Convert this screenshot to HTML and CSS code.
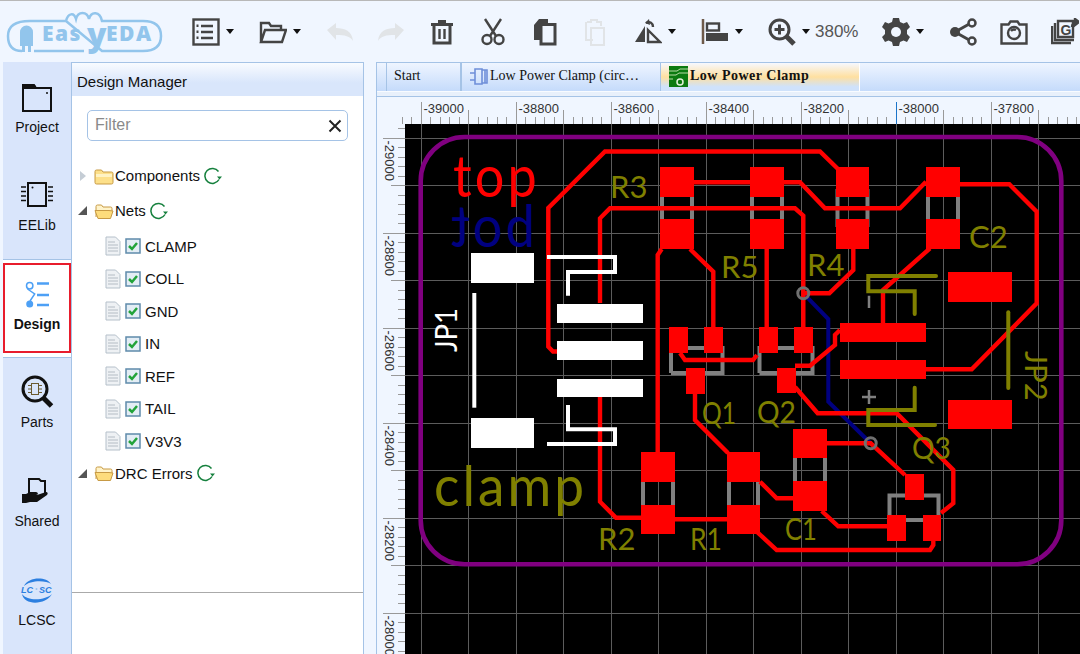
FILE: index.html
```html
<!DOCTYPE html>
<html lang="en">
<head>
<meta charset="UTF-8">
<meta name="viewport" content="width=device-width, initial-scale=1.0">
<title>EasyEDA - Low Power Clamp</title>
<link rel="stylesheet" href="styles.css">
</head>
<body>

<svg class="defs" width="0" height="0">
  <symbol id="folder" viewBox="0 0 20 18">
    <path d="M1 4.500a1.500 1.500 0 0 1 1.500-1.500h5l1.500 2h8.500a1.500 1.500 0 0 1 1.500 1.500v9a1.500 1.500 0 0 1-1.500 1.500h-15a1.500 1.500 0 0 1-1.500-1.500z" fill="#fde08a" stroke="#c79a45"/>
    <path d="M2 7h16v3H2z" fill="#fff3c4"/>
  </symbol>
  <symbol id="folder-open" viewBox="0 0 20 18">
    <path d="M2 15V4.500a1.500 1.500 0 0 1 1.500-1.500h4l1.500 2h7.500a1.500 1.500 0 0 1 1.500 1.500V9" fill="#fff3c9" stroke="#c79a45"/>
    <path d="M1 8.500h14l4 .5-2.500 7.500H4z" fill="#fddc7c" stroke="#c79a45"/>
  </symbol>
  <symbol id="refresh" viewBox="0 0 18 18">
    <path d="M15 12.500a7.500 7.500 0 1 1-.5-8" fill="none" stroke="#15803d" stroke-width="1.500"/>
    <path d="M13 9.500h5l-2.500 3z" fill="#15803d"/>
  </symbol>
  <symbol id="doc" viewBox="0 0 16 20">
    <path d="M1 1h9.500L15 5.500V19H1z" fill="#eef1f4" stroke="#b5c0ca"/>
    <path d="M3 6h7M3 9h10M3 12h10M3 15h10" stroke="#b4bcc4"/>
  </symbol>
  <symbol id="check" viewBox="0 0 16 16">
    <rect x="1" y="1" width="14" height="14" fill="#e3edf5" stroke="#5f8bab" stroke-width="1.500"/>
    <path d="M4 8l3 3 5-6" fill="none" stroke="#22a33a" stroke-width="2.500"/>
  </symbol>
  <symbol id="clip-pcb" viewBox="0 0 19 21">
    <rect width="19" height="21" fill="#0c7a10"/>
    <path d="M0 5h8l3-2h8M0 9h7l3-2h9M0 13h4" fill="none" stroke="#b7dba4"/>
    <circle cx="11" cy="16" r="3" fill="none" stroke="#e4f0da" stroke-width="1.500"/>
  </symbol>
</svg>

<header class="toolbar">
  <svg class="logo" width="170" height="50" viewBox="0 0 170 50">
    <path class="logo-line" d="M66 13H30Q8 13 8 28Q8 43 22 43M34 43H84M102 43H143Q161 43 161 28Q161 13 143 13H102C100 3 91 3 89 11C87 3 78 3 76 11C74 4 68 5 66 13Z"/>
    <path class="logo-fill" d="M20 24a6.500 6.500 0 0 1 13 0V38h-2v6h-3v-6h-3v6h-3v-6h-2z"/>
    <text class="logo-text" x="42" y="33">Eas</text>
    <text class="logo-y" x="87" y="38">y</text>
    <text class="logo-text" x="106" y="33">EDA</text>
  </svg>

  <div class="tools">
    <div class="tool drop">
      <svg width="28" height="28" viewBox="0 0 28 28"><rect x="1.500" y="1.500" width="25" height="25" class="ic-line"/><path d="M9 8h12M9 14h12M9 20h12" class="ic-line"/><path d="M4.500 6.500h2v2.500h-2zM4.500 12.500h2v2.500h-2zM4.500 18.500h2v2.500h-2z" class="ic-fill"/></svg>
      <span class="caret"></span>
    </div>
    <div class="tool drop">
      <svg width="28" height="28" viewBox="0 0 28 28"><path d="M2 24V5h8l2 3h10v4M2 24l4-12h21l-4 12z" class="ic-line"/></svg>
      <span class="caret"></span>
    </div>
    <div class="tool">
      <svg width="28" height="28" viewBox="0 0 28 28"><path d="M1 12L10 5v5c9 0 16 3 17 13-3-5-8-6-17-6v5z" class="ic-off"/></svg>
    </div>
    <div class="tool">
      <svg width="28" height="28" viewBox="0 0 28 28"><path d="M27 12L18 5v5C9 10 2 13 1 23c3-5 8-6 17-6v5z" class="ic-off"/></svg>
    </div>
    <div class="tool">
      <svg width="28" height="28" viewBox="0 0 28 28"><path d="M3 5h22v3H3zM10 5V2h8v3z" class="ic-fill"/><path d="M6 8v17h16V8" class="ic-thick"/><path d="M11.500 11v10M16.500 11v10" class="ic-line"/></svg>
    </div>
    <div class="tool">
      <svg width="28" height="28" viewBox="0 0 28 28"><path d="M6 1l11 17M22 1L11 18" class="ic-line"/><circle cx="8" cy="21.500" r="4.500" class="ic-line"/><circle cx="20" cy="21.500" r="4.500" class="ic-line"/></svg>
    </div>
    <div class="tool">
      <svg width="28" height="28" viewBox="0 0 28 28"><path d="M9 1h9v5H11v16H4V7z" class="ic-fill"/><rect x="11" y="6.500" width="14" height="19.500" class="ic-thick"/></svg>
    </div>
    <div class="tool">
      <svg width="28" height="28" viewBox="0 0 28 28"><path d="M6 4h4V2h6v2h4v4M5 4v18h7" class="ic-paste"/><rect x="10" y="10" width="13" height="17" class="ic-paste"/></svg>
    </div>
    <div class="tool drop flip">
      <svg width="28" height="28" viewBox="0 0 28 28"><path d="M11 8v16H1z" class="ic-fill"/><path d="M14 12l12 12H14z" class="ic-line"/><path d="M12 5c4-2 7 0 7 4" class="ic-line"/><path d="M15 1l-4 4 5 2z" class="ic-fill"/></svg>
      <span class="caret"></span>
    </div>
    <div class="tool drop">
      <svg width="28" height="28" viewBox="0 0 28 28"><path d="M2 1v25" class="ic-rust"/><rect x="6" y="5.500" width="12" height="7" class="ic-line"/><rect x="5" y="15" width="22" height="8" class="ic-fill"/></svg>
      <span class="caret"></span>
    </div>
    <div class="tool zoom">
      <svg width="28" height="28" viewBox="0 0 28 28"><circle cx="11.500" cy="11.500" r="9.500" class="ic-thick"/><path d="M11.500 6.500v10M6.500 11.500h10" class="ic-thick"/><path d="M18 18l8 8" class="ic-heavy"/></svg>
      <span class="caret"></span>
      <span class="zoom-val">380%</span>
    </div>
    <div class="tool drop">
      <svg width="28" height="28" viewBox="0 0 28 28"><path d="M11 0h6l1 4 3.500 1.500L25 4l3 5-3 3v4l3 3-3 5-3.500-1.500L18 24l-1 4h-6l-1-4-3.500-1.500L3 24l-3-5 3-3v-4L0 9l3-5 3.500 1.500L10 4z" class="ic-fill"/><circle cx="14" cy="14" r="5" class="ic-hole"/></svg>
      <span class="caret"></span>
    </div>
    <div class="tool">
      <svg width="28" height="28" viewBox="0 0 28 28"><path d="M6 14L22 5M6 14l16 9" class="ic-thick"/><circle cx="6" cy="14" r="5" class="ic-fill"/><circle cx="23" cy="5" r="3.500" class="ic-ring"/><circle cx="23" cy="23" r="3.500" class="ic-ring"/></svg>
    </div>
    <div class="tool">
      <svg width="28" height="28" viewBox="0 0 28 28"><path d="M1.500 6.500h7l2-3h7l2 3h7v19h-25z" class="ic-line"/><circle cx="14" cy="15" r="6" class="ic-line"/><path d="M11 13a4 4 0 0 1 5-1" class="ic-line"/></svg>
    </div>
    <div class="tool">
      <svg width="28" height="28" viewBox="0 0 28 28"><path d="M1 8v17h19M4 5v17h19" class="ic-line"/><path d="M7 3h15v16H7z" class="ic-line"/><text class="ic-g" x="9.500" y="17">G</text><path d="M21 9c0-3 2-5 5-5M24 1l4 3-4 3z" class="ic-line"/></svg>
    </div>
  </div>
</header>

<main class="workspace">
  <nav class="sidebar">
    <div class="side-item first">
      <svg width="32" height="32" viewBox="0 0 32 32"><path d="M2 1h11l2 3h15v23H2z" class="nav-line"/><path d="M1 1h13l2 4H1z" class="nav-fill"/><circle cx="26" cy="9" r="1" class="nav-fill"/></svg>
      <span>Project</span>
    </div>
    <div class="side-item second">
      <svg width="32" height="32" viewBox="0 0 32 32"><rect x="7" y="1" width="18" height="23" class="nav-line"/><circle cx="11.500" cy="5.500" r="1" class="nav-fill"/><path d="M0 5h5M0 9.500h5M0 14h5M0 18.500h5M27 5h5M27 9.500h5M27 14h5M27 18.500h5" class="nav-thin"/></svg>
      <span>EELib</span>
    </div>
    <div class="side-item active">
      <svg width="32" height="32" viewBox="0 0 32 32"><circle cx="8.700" cy="4.700" r="3.200" class="des-ring"/><path d="M6.500 8l7.200 5-4.700 7" class="des-thin"/><circle cx="8.700" cy="23" r="3.500" class="des-fill"/><path d="M16 2.500h12M16 14h12M16 24h12" class="des-bar"/></svg>
      <span>Design</span>
    </div>
    <div class="side-item">
      <svg width="32" height="32" viewBox="0 0 32 32"><circle cx="14" cy="10" r="12" class="nav-heavy"/><path d="M22.500 19l8 8" class="nav-heavier"/><rect x="10.500" y="4.500" width="7" height="11" class="nav-chip"/><path d="M7 6.500h3M7 10h3M7 13.500h3M18 6.500h3M18 10h3M18 13.500h3" class="nav-chip"/></svg>
      <span>Parts</span>
    </div>
    <div class="side-item">
      <svg width="32" height="32" viewBox="0 0 32 32"><path d="M8 15V1h10l2 2h4v12" class="nav-line"/><path d="M1 16h4l4-2h6c2 0 3 3 0 3h-4 5l9-3c2 0 2 2 1 3l-10 7H9l-4 1H1z" class="nav-fill"/></svg>
      <span>Shared</span>
    </div>
    <div class="side-item">
      <svg width="32" height="32" viewBox="0 0 32 32"><path d="M3 9C7 0 25-1 30 7 25 3 9 3 3 9z" class="lc-fill"/><path d="M1 17c2 12 24 11 30 0-6 6-24 8-30 0z" class="lc-fill"/><text class="lc-text" x="0" y="16">LC</text><text class="lc-text" x="18" y="16">SC</text><circle cx="15.500" cy="12" r="1" class="lc-dot"/></svg>
      <span>LCSC</span>
    </div>
  </nav>

  <section class="manager">
    <div class="manager-title">Design Manager</div>
    <div class="filter">
      <span class="filter-text">Filter</span>
      <svg width="14" height="14" viewBox="0 0 14 14"><path d="M1.500 1.500l11 11M12.500 1.500l-11 11" class="filter-x"/></svg>
    </div>
    <div class="tree">
      <div class="tree-row">
        <span class="arrow-closed"></span>
        <svg class="ic-folder" width="20" height="18"><use href="#folder"/></svg>
        <span>Components</span>
        <svg class="ic-refresh" width="18" height="18"><use href="#refresh"/></svg>
      </div>
      <div class="tree-row">
        <span class="arrow-open"></span>
        <svg class="ic-folder" width="20" height="18"><use href="#folder-open"/></svg>
        <span>Nets</span>
        <svg class="ic-refresh" width="18" height="18"><use href="#refresh"/></svg>
      </div>
      <ul class="nets">
        <li><svg width="16" height="20"><use href="#doc"/></svg><svg width="16" height="16"><use href="#check"/></svg><span>CLAMP</span></li>
        <li><svg width="16" height="20"><use href="#doc"/></svg><svg width="16" height="16"><use href="#check"/></svg><span>COLL</span></li>
        <li><svg width="16" height="20"><use href="#doc"/></svg><svg width="16" height="16"><use href="#check"/></svg><span>GND</span></li>
        <li><svg width="16" height="20"><use href="#doc"/></svg><svg width="16" height="16"><use href="#check"/></svg><span>IN</span></li>
        <li><svg width="16" height="20"><use href="#doc"/></svg><svg width="16" height="16"><use href="#check"/></svg><span>REF</span></li>
        <li><svg width="16" height="20"><use href="#doc"/></svg><svg width="16" height="16"><use href="#check"/></svg><span>TAIL</span></li>
        <li><svg width="16" height="20"><use href="#doc"/></svg><svg width="16" height="16"><use href="#check"/></svg><span>V3V3</span></li>
      </ul>
      <div class="tree-row">
        <span class="arrow-open"></span>
        <svg class="ic-folder" width="20" height="18"><use href="#folder-open"/></svg>
        <span>DRC Errors</span>
        <svg class="ic-refresh" width="18" height="18"><use href="#refresh"/></svg>
      </div>
    </div>
    <div class="manager-foot"></div>
  </section>

  <section class="editor">
    <div class="tabs">
      <div class="tab tab-start">Start</div>
      <div class="tab tab-sch">
        <svg width="19" height="19" viewBox="0 0 19 19"><path d="M6 2h7v15H6zM6 6H1M6 13H1M13 3h5v13h-5M16 3v13" class="sch-line"/></svg>
        <span>Low Power Clamp (circ…</span>
      </div>
      <div class="tab tab-pcb">
        <svg width="19" height="21"><use href="#clip-pcb"/></svg>
        <span>Low Power Clamp</span>
      </div>
    </div>
    <div class="tabs-foot"></div>
    <svg id="rulerTop" class="ruler-top" width="703" height="27" viewBox="377 97 703 27"></svg>
    <div class="stage">
      <svg id="rulerLeft" class="ruler-left" width="28" height="530" viewBox="377 124 28 530"></svg>
      <svg class="board" width="675" height="530" viewBox="405 124 675 530">
        <g id="grid"></g>

        <rect class="outline" x="420.700" y="137" width="640.600" height="427.300" rx="44"/>

        <!-- bottom layer -->
        <path class="bottom" d="M803.300 293.300L828.300 319V401.700L870.700 443.300"/>
        <text class="bottom-text" transform="translate(535 246.700) scale(-.9 1)" textLength="93">bot</text>

        <!-- top silk under the pads -->
        <g class="gray">
          <path d="M662 197V219M692 197V219M752 197V219M782 197V219"/>
          <path d="M837.500 189V227M867.500 189V227M928 197V219M958 197V219"/>
          <path d="M643 482V505M673 482V505M729 473V505M758 482V505M795 458V481M825 458V481"/>
          <path d="M671 373V348H722.500V373H671M759.500 373V348H812.500V373H759.500M889.500 520V495.500H938.500V520H889.500"/>
        </g>

        <!-- tracks -->
        <g class="track">
          <path d="M557 351.500H553L548.300 346.700V208L605 151.500H820L838 169"/>
          <path d="M694 182.300H750M784 182.300H800L825 208.300H900L926 181.700"/>
          <path d="M960 184.300H1009.300L1036.700 211.700V303.300L971.700 369.300H926"/>
          <path d="M600 303V218.300L610 208.300H795L803.300 215.700V327.300"/>
          <path d="M600 397V501.700L616 517.700H641"/>
          <path d="M661.700 249L657.700 255V452M690 249L713.300 271.700V327.300"/>
          <path d="M675 519.300H727M760 481.700L776.700 498.300H793"/>
          <path d="M756.700 531.700L776.700 550H930L933.300 545V538"/>
          <path d="M821.700 511L838.300 526.300H888M827 443.300H870.700L905 475"/>
          <path d="M941 513L953.300 503.300V470L896.700 413.300H817.700L795 387"/>
          <path d="M680 353L685 360H753L757 355M766.700 249V327"/>
          <path d="M695 394V420L728 453"/>
          <path d="M853.300 249V270L829.300 293.300H803.300"/>
          <path d="M795 365.700H810L835 345V335L840 330"/>
          <path d="M883 323V290L930 248.300"/>
        </g>

        <!-- pads -->
        <g class="pad">
          <rect x="660" y="167" width="34" height="30"/><rect x="660" y="219" width="34" height="30"/>
          <rect x="750" y="167" width="34" height="30"/><rect x="750" y="219" width="34" height="30"/>
          <rect x="836" y="167" width="33" height="30"/><rect x="836" y="219" width="33" height="30"/>
          <rect x="926" y="167" width="34" height="30"/><rect x="926" y="219" width="34" height="30"/>
          <rect x="641" y="452" width="34" height="30"/><rect x="641" y="505" width="34" height="29"/>
          <rect x="727" y="452" width="33" height="30"/><rect x="727" y="505" width="33" height="29"/>
          <rect x="793" y="429" width="34" height="29"/><rect x="793" y="481" width="34" height="30"/>
          <rect x="669" y="327" width="19" height="26"/><rect x="704" y="327" width="19" height="26"/><rect x="686" y="368" width="19" height="26"/>
          <rect x="759" y="327" width="19" height="26"/><rect x="794" y="327" width="19" height="26"/><rect x="777" y="368" width="19" height="25"/>
          <rect x="905" y="474" width="19" height="26"/><rect x="887" y="515" width="19" height="26"/><rect x="923" y="515" width="18" height="26"/>
          <rect x="840" y="323" width="86" height="19"/><rect x="840" y="360" width="86" height="19"/>
          <rect x="948" y="272" width="64" height="30"/><rect x="948" y="400" width="64" height="29"/>
        </g>

        <!-- JP1 -->
        <g class="white-pad">
          <rect x="471" y="253" width="63" height="30"/><rect x="471" y="418" width="63" height="30"/>
          <rect x="557" y="304" width="86" height="19"/><rect x="557" y="341" width="86" height="19"/><rect x="557" y="379" width="86" height="18"/>
        </g>
        <g class="white-silk">
          <path d="M474.300 293V407.700"/>
          <path d="M547 257H615V272H568V295.700"/>
          <path d="M568 405V429.300H615V444H547"/>
        </g>

        <!-- olive silk -->
        <g class="olive">
          <path d="M936 276H868.300V291.300H914.700V314"/>
          <path d="M914.700 387.700V410H868.300V425H935"/>
          <path d="M1008.300 312.300V388"/>
        </g>
        <path class="gray-thin" d="M869 295.700V308M862 397H876M869 390V404"/>

        <!-- vias -->
        <circle class="via" cx="803.300" cy="293.300" r="5.500"/>
        <circle class="via" cx="870.700" cy="443.300" r="5.500"/>

        <!-- text -->
        <text class="top-text" transform="translate(453 197) scale(.9 1)" textLength="93">top</text>
        <text class="olive-big" transform="translate(434 506) scale(.95 1)" textLength="158">clamp</text>
        <text class="jp1" transform="rotate(-90 457 352)" x="457" y="352" textLength="44" lengthAdjust="spacingAndGlyphs">JP1</text>
        <text class="label" transform="rotate(90 1025 351)" x="1025" y="351">JP2</text>
        <text class="label" x="610" y="198">R3</text>
        <text class="label" x="721" y="278">R5</text>
        <text class="label" x="807" y="276">R4</text>
        <text class="label" x="969" y="248">C2</text>
        <text class="label" x="702" y="424" textLength="34" lengthAdjust="spacingAndGlyphs">Q1</text>
        <text class="label" x="757" y="423" textLength="39" lengthAdjust="spacingAndGlyphs">Q2</text>
        <text class="label" x="912" y="459" textLength="39" lengthAdjust="spacingAndGlyphs">Q3</text>
        <text class="label" x="598" y="550">R2</text>
        <text class="label" x="690" y="550" textLength="32" lengthAdjust="spacingAndGlyphs">R1</text>
        <text class="label" x="785" y="540" textLength="32" lengthAdjust="spacingAndGlyphs">C1</text>
      </svg>
    </div>
  </section>
</main>

<script src="script.js"></script>
</body>
</html>
```

FILE: styles.css
```css
* {
    box-sizing: border-box;
}

body {
    margin: 0;
    width: 1080px;
    height: 654px;
    overflow: hidden;
    background-color: #f0f6ff;
    font-family: "Liberation Sans", Arial, sans-serif;
    color: #111;
}

.defs {
    display: block;
    height: 0;
}

/* toolbar */
.toolbar {
    height: 62px;
    border-top: 1px solid #b8b8b8;
    display: flex;
    align-items: center;
}

.logo {
    flex: none;
    width: 170px;
    margin-top: 3px;
}

.logo-line {
    fill: none;
    stroke: #92c5ec;
    stroke-width: 2.5;
}

.logo-fill {
    fill: #92c5ec;
}

.logo-text {
    fill: #92c5ec;
    font-family: "Open Sans", sans-serif;
    font-weight: 800;
    font-size: 21px;
    letter-spacing: 1.5px;
}

.logo-y {
    fill: #92c5ec;
    font-family: "Open Sans", sans-serif;
    font-weight: 800;
    font-size: 32px;
}

.tools {
    display: flex;
    align-items: center;
    margin-left: 22px;
}

.tool {
    flex: none;
    width: 51px;
    display: flex;
    align-items: center;
}

.tool.drop {
    width: 67px;
}

.tool.flip {
    width: 69px;
    padding-left: 2px;
}

.tool.zoom {
    width: 114px;
}

.caret {
    width: 0;
    height: 0;
    margin-left: 6px;
    border-top: 5px solid #111;
    border-left: 4.5px solid transparent;
    border-right: 4.5px solid transparent;
}

.zoom-val {
    font-size: 17px;
    color: #555;
    margin-left: 5px;
}

.ic-line {
    fill: none;
    stroke: #444;
    stroke-width: 2.4;
}

.ic-thick {
    fill: none;
    stroke: #444;
    stroke-width: 3;
}

.ic-heavy {
    fill: none;
    stroke: #444;
    stroke-width: 5;
}

.ic-fill {
    fill: #444;
}

.ic-off {
    fill: #e1e4e7;
}

.ic-paste {
    fill: none;
    stroke: #e1e4e7;
    stroke-width: 2;
}

.ic-rust {
    fill: none;
    stroke: #6e5a4a;
    stroke-width: 2.5;
}

.ic-hole {
    fill: #f0f6ff;
}

.ic-ring {
    fill: #f0f6ff;
    stroke: #444;
    stroke-width: 2.5;
}

.ic-g {
    fill: #444;
    font-size: 14px;
    font-weight: 700;
}

/* main area */
.workspace {
    display: flex;
    height: 592px;
    padding-left: 3px;
}

.sidebar {
    flex: none;
    width: 69px;
    background-color: #d9e5fb;
    border-right: 1px solid #a5c3e6;
}

.side-item {
    position: relative;
    height: 99px;
    padding-top: 21px;
    display: flex;
    flex-direction: column;
    align-items: center;
    font-size: 14px;
    line-height: 16px;
}

.side-item svg {
    overflow: visible;
    margin-bottom: 3px;
}

.side-item.first {
    height: 100px;
    padding-top: 22px;
}

.side-item.second {
    height: 97px;
    padding-top: 20px;
}

.side-item.active {
    background-color: #fff;
    border-top: 1px solid #a5c3e6;
    border-bottom: 1px solid #a5c3e6;
    padding-top: 21px;
    font-weight: 700;
}

.side-item.active::after {
    content: "";
    position: absolute;
    left: 0;
    right: 0;
    top: 3px;
    bottom: 4px;
    border: 2px solid #e81c2c;
}

.nav-line {
    fill: none;
    stroke: #111;
    stroke-width: 2;
}

.nav-thin {
    fill: none;
    stroke: #111;
    stroke-width: 1.5;
}

.nav-fill {
    fill: #111;
}

.nav-heavy {
    fill: none;
    stroke: #111;
    stroke-width: 3;
}

.nav-heavier {
    fill: none;
    stroke: #111;
    stroke-width: 5;
}

.nav-chip {
    fill: none;
    stroke: #6b5a30;
    stroke-width: 1;
}

.des-ring {
    fill: none;
    stroke: #4da0f5;
    stroke-width: 1.5;
}

.des-thin {
    fill: none;
    stroke: #4da0f5;
    stroke-width: 1.5;
}

.des-fill {
    fill: #4da0f5;
}

.des-bar {
    fill: none;
    stroke: #4da0f5;
    stroke-width: 2.5;
}

.lc-fill {
    fill: #2c7fe0;
}

.lc-text {
    fill: #2c7fe0;
    font-size: 9px;
    font-weight: 700;
    font-style: italic;
}

.lc-dot {
    fill: #9cc3ee;
}

/* design manager */
.manager {
    flex: none;
    width: 292px;
    background-color: #fff;
    border-right: 1px solid #a5c3e6;
    display: flex;
    flex-direction: column;
}

.manager-title {
    height: 34px;
    border-top: 1px solid #a5c3e6;
    padding: 9px 0 0 5px;
    font-size: 15px;
    line-height: 20px;
    background: linear-gradient(to bottom, #f8fbff, #d9e6fb 60%);
}

.filter {
    margin: 14px 0 0 15px;
    width: 261px;
    height: 31px;
    border: 1px solid #a5c3e6;
    border-radius: 5px;
    padding: 0 5px 0 7px;
    display: flex;
    align-items: center;
    justify-content: space-between;
}

.filter-text {
    font-size: 16px;
    color: #8a8a8a;
    padding-bottom: 2px;
}

.filter-x {
    fill: none;
    stroke: #222;
    stroke-width: 2;
}

.tree {
    flex: 1;
    margin-top: 17px;
    font-size: 15px;
}

.tree-row {
    height: 35px;
    display: flex;
    align-items: center;
    padding-left: 6px;
}

.arrow-closed {
    width: 0;
    height: 0;
    margin-left: 2px;
    margin-right: 8px;
    border-left: 6px solid #c5cdd5;
    border-top: 5px solid transparent;
    border-bottom: 5px solid transparent;
}

.arrow-open {
    width: 0;
    height: 0;
    margin-right: 7px;
    border-bottom: 9px solid #555;
    border-left: 9px solid transparent;
}

.ic-folder {
    margin-right: 1px;
}

.ic-refresh {
    margin-left: 4px;
}

.nets {
    list-style: none;
    margin: 2px 0 -2px;
    padding: 0 0 0 33px;
}

.nets li {
    height: 32.5px;
    display: flex;
    align-items: center;
    gap: 4px;
}

.manager-foot {
    height: 62px;
    border-top: 1px solid #aaa;
}

/* editor */
.editor {
    flex: none;
    width: 704px;
    margin-left: 12px;
    border-left: 1px solid #a5c3e6;
    border-top: 1px solid #a5c3e6;
    display: flex;
    flex-direction: column;
}

.tabs {
    height: 28px;
    display: flex;
    padding-left: 9px;
    background: linear-gradient(to bottom, #eff5ff, #c5dbfb);
    font-family: "Liberation Serif", "Times New Roman", serif;
    font-size: 14px;
}

.tab {
    flex: none;
    display: flex;
    align-items: center;
    gap: 2px;
    padding-bottom: 2px;
    border-left: 1px solid #a5c3e6;
    border-right: 1px solid #a5c3e6;
}

.tab-start {
    width: 75px;
    padding-left: 7px;
}

.tab-sch {
    width: 200px;
    padding-left: 7px;
}

.tab-pcb {
    width: 199px;
    padding-left: 8px;
    font-weight: 700;
    letter-spacing: 0.5px;
    border: 0;
    border-right: 1px solid #fff;
    background: linear-gradient(to bottom, #f6f8ff, #ffe0a0 50%, #cfe2fb 85%);
}

.sch-line {
    fill: none;
    stroke: #6f8fd9;
    stroke-width: 1.6;
}

.tabs-foot {
    height: 6px;
    flex: none;
    background-color: #e8f0fb;
    border-top: 1px solid #f8fbff;
    border-bottom: 1px solid #a5c3e6;
}

.ruler-top,
.ruler-left {
    flex: none;
    display: block;
}

.stage {
    display: flex;
}

.board {
    flex: none;
    display: block;
    background-color: #000;
}

.tick {
    stroke: #999;
    stroke-width: 1;
    shape-rendering: crispEdges;
}

.tick-now {
    stroke: #1b74c9;
    stroke-width: 1;
    shape-rendering: crispEdges;
}

.ruler-text {
    fill: #333;
    font-size: 13px;
}

.grid-line {
    stroke: #5c5c5c;
    stroke-width: 1;
    shape-rendering: crispEdges;
}

/* pcb layers */
.outline {
    fill: none;
    stroke: #800080;
    stroke-width: 4.6;
}

.track,
.bottom,
.gray,
.olive,
.white-silk {
    fill: none;
    stroke-width: 4;
}

.track {
    stroke: #f00;
    stroke-width: 4.4;
}

.bottom {
    stroke: #000080;
}

.gray {
    stroke: #808080;
}

.gray-thin {
    fill: none;
    stroke: #808080;
    stroke-width: 2.5;
}

.olive {
    stroke: #808000;
    stroke-linecap: round;
}

.white-silk {
    stroke: #fff;
}

.pad {
    fill: #f00;
}

.white-pad {
    fill: #fff;
}

.via {
    fill: none;
    stroke: #707070;
    stroke-width: 3;
}

.top-text {
    fill: #f00;
    font-family: Lato, sans-serif;
    font-size: 58px;
}

.bottom-text {
    fill: #000080;
    font-family: Lato, sans-serif;
    font-size: 58px;
}

.olive-big {
    fill: #808000;
    font-family: Lato, sans-serif;
    font-size: 56px;
}

.label {
    fill: #808000;
    font-family: Lato, sans-serif;
    font-size: 31px;
}

.jp1 {
    fill: #fff;
    font-family: Lato, sans-serif;
    font-size: 31px;
}
```

FILE: script.js
```js
// rulers and grid share the same 47.5px step (200 units = 95px)
const NS = 'http://www.w3.org/2000/svg';
const X0 = 420.7;
const Y0 = 137.7;

function add(parent, tag, attrs, text) {
    const el = document.createElementNS(NS, tag);
    for (const key in attrs) {
        el.setAttribute(key, attrs[key]);
    }
    if (text) {
        el.textContent = text;
    }
    parent.appendChild(el);
}

function crisp(v) {
    return Math.round(v) + 0.5;
}

const rulerTop = document.getElementById('rulerTop');
const rulerLeft = document.getElementById('rulerLeft');
const grid = document.getElementById('grid');

for (let i = -2; i <= 69; i++) {
    const x = crisp(X0 + i * 9.5);
    const top = i % 10 === 0 ? 102 : (i % 5 === 0 ? 110 : 117);
    add(rulerTop, 'line', { class: 'tick', x1: x, x2: x, y1: top, y2: 124 });
    if (i % 10 === 0) {
        add(rulerTop, 'text', { class: 'ruler-text', x: x + 2, y: 113 }, String(-39000 + i * 20));
    }
    if (i % 5 === 0) {
        add(grid, 'line', { class: 'grid-line', x1: x, x2: x, y1: 124, y2: 654 });
    }
}
add(rulerTop, 'line', { class: 'tick-now', x1: 896.5, x2: 896.5, y1: 102, y2: 124 });

for (let i = -1; i <= 55; i++) {
    const y = crisp(Y0 + i * 9.5);
    const left = i % 10 === 0 ? 383 : (i % 5 === 0 ? 391 : 398);
    add(rulerLeft, 'line', { class: 'tick', x1: left, x2: 405, y1: y, y2: y });
    if (i % 10 === 0) {
        const ty = y + 2;
        add(rulerLeft, 'text', { class: 'ruler-text', x: 385, y: ty, transform: `rotate(90 385 ${ty})` }, String(-29000 + i * 20));
    }
    if (i % 5 === 0) {
        add(grid, 'line', { class: 'grid-line', x1: 405, x2: 1080, y1: y, y2: y });
    }
}
```
